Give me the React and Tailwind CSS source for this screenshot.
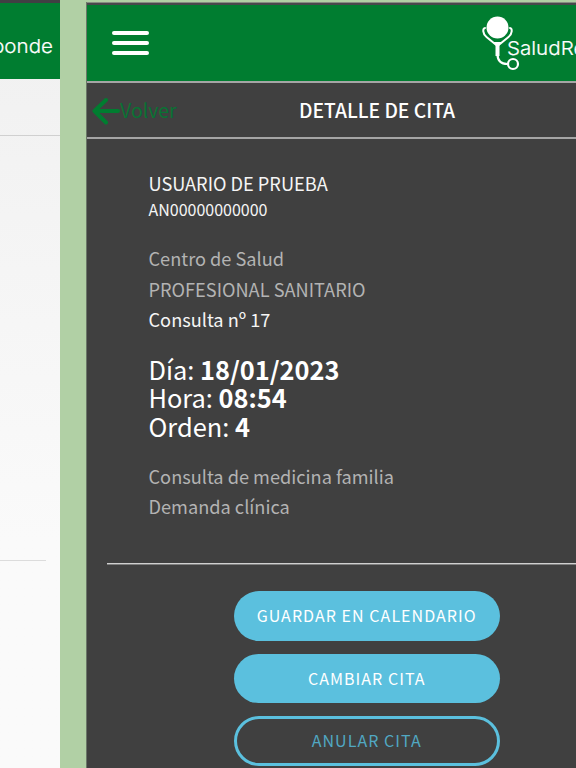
import React from 'react';

const actions = [
  { label: 'GUARDAR EN CALENDARIO', style: 'bg-[#5bc0de] text-white' },
  { label: 'CAMBIAR CITA', style: 'bg-[#5bc0de] text-white' },
  { label: 'ANULAR CITA', style: 'border-3 border-[#5bc0de] text-[#51a8c3]' },
];

const Wordmark = ({ x }) => (
  <text
    x={x}
    y="50"
    fill="white"
    stroke="white"
    strokeWidth="0.2"
    fontSize="19"
    fontWeight="300"
    fontFamily="Inter, sans-serif"
    textLength="150"
    lengthAdjust="spacingAndGlyphs"
  >
    SaludResponde
  </text>
);

const Logo = () => (
  <svg width="96" height="76" viewBox="0 0 96 76" fill="none" stroke="white">
    <circle cx="17.5" cy="22.5" r="11" fill="white" stroke="none" />
    <path d="M5 23C2.5 23 2.5 29 6.5 32L17.5 41L28.5 32C32.5 29 32.5 23 30 23" strokeWidth="2" strokeLinecap="round" />
    <path d="M13.5 37H21.5L19.5 40V51H15.5V40Z" fill="white" stroke="none" />
    <path d="M17.5 49C17.5 56 20.5 59 27.5 59" strokeWidth="2.2" />
    <circle cx="33" cy="59" r="5" strokeWidth="2.2" />
    <Wordmark x="27" />
  </svg>
);

const PreviousScreen = () => (
  <div className="w-[60px] h-full shrink-0 overflow-hidden bg-gradient-to-b from-[#f0f0f0] to-[#fafafa] to-70%">
    <div className="h-[3px] bg-[#403e43]"></div>
    <div className="h-[76px] bg-[#007d30] flex justify-end">
      <svg width="60" height="76" viewBox="0 0 60 76">
        <Wordmark x="-97" />
      </svg>
    </div>
    <div className="h-[57px] border-b border-[#d0d0d0]"></div>
    <div className="w-[46px] h-[425px] border-b border-[#dcdcdc]"></div>
  </div>
);

export default function App() {
  return (
    <div className="w-[576px] h-[768px] flex overflow-hidden bg-[#b1d0a5] font-['Noto_Sans_CJK_SC','Noto_Sans',sans-serif]">
      <PreviousScreen />

      <div className="ml-[26px] mt-[2px] flex-1 min-w-0 flex flex-col bg-[#404040] border-l border-[#6b7768]">
        <div className="h-[3px] shrink-0 bg-[#49484c] border-t border-[#858d82]"></div>
        <header className="h-[76px] shrink-0 bg-[#007d30] flex justify-between overflow-hidden">
          <div className="ml-[25px] mt-[26px] flex flex-col gap-[6px]">
            <div className="w-[37px] h-[4px] rounded-[2px] bg-white"></div>
            <div className="w-[37px] h-[4px] rounded-[2px] bg-white"></div>
            <div className="w-[37px] h-[4px] rounded-[2px] bg-white"></div>
          </div>
          <Logo />
        </header>

        <div className="h-[58px] shrink-0 flex items-center border-t-2 border-b-2 border-[#a5a5a5]">
          <a href="#" className="w-[212px] pl-[5px] flex items-center text-[#0a7234] text-[19.5px]">
            <svg className="mt-px" width="28" height="28" viewBox="0 0 28 28" fill="none" stroke="#007d30" strokeWidth="4" strokeLinecap="round" strokeLinejoin="round">
              <path d="M14 3L2.5 14L14 25.5M2.5 14H26" />
            </svg>
            Volver
          </a>
          <h1 className="text-[19.3px] font-medium text-white whitespace-nowrap">DETALLE DE CITA</h1>
        </div>

        <main className="pl-[61.5px] pt-[31px] text-[18.2px] text-[#b3b3b3] whitespace-nowrap">
          <div className="text-[#f5f5f5]">
            <p className="leading-[26px]">USUARIO DE PRUEBA</p>
            <p className="text-[16px] leading-[26px]">AN00000000000</p>
          </div>
          <div className="mt-[21px] leading-[30.5px]">
            <p>Centro de Salud</p>
            <p>PROFESIONAL SANITARIO</p>
            <p className="text-[#f5f5f5]">Consulta nº 17</p>
          </div>
          <div className="mt-[20px] text-[25.4px] leading-[28.5px] text-white">
            <p>Día: <b>18/01/2023</b></p>
            <p>Hora: <b>08:54</b></p>
            <p>Orden: <b>4</b></p>
          </div>
          <div className="mt-[21px] leading-[30px]">
            <p>Consulta de medicina familia</p>
            <p>Demanda clínica</p>
          </div>
        </main>

        <div className="ml-[20px] mt-[42px] h-[2px] shrink-0 bg-[#808080] border-t border-[#d0d0d0]"></div>

        <div className="ml-[146.5px] mt-[26px] w-[266.5px] flex flex-col gap-[13px]">
          {actions.map((action) => (
            <button
              key={action.label}
              className={`h-[49.5px] shrink-0 rounded-full flex items-center justify-center pb-px text-[16px] tracking-[1.05px] whitespace-nowrap ${action.style}`}
            >
              {action.label}
            </button>
          ))}
        </div>
      </div>
    </div>
  );
}
